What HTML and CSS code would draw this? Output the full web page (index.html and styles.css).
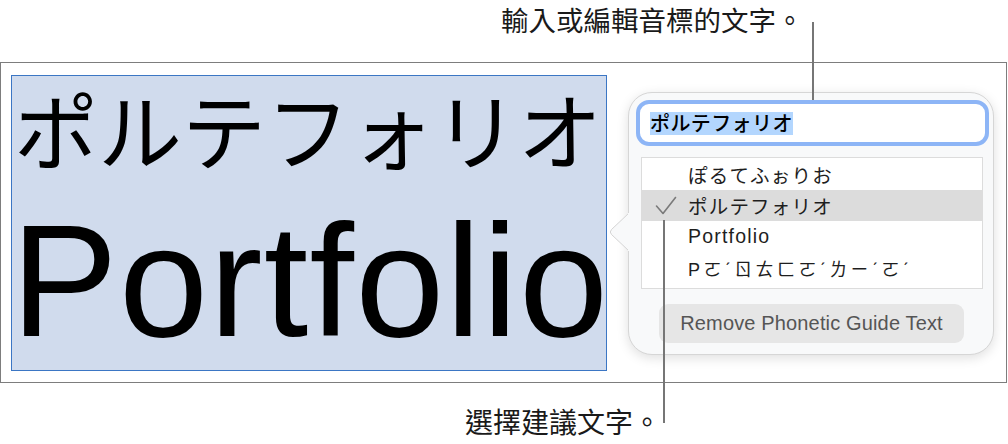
FILE: index.html
```html
<!DOCTYPE html>
<html lang="zh-Hant">
<head>
<meta charset="utf-8">
<title>Phonetic Guide</title>
<link rel="stylesheet" href="styles.css">
</head>
<body>
<div class="page">
  <div class="callout-top"><span class="label">輸入或編輯音標的文字。</span></div>
  <div class="frame">
    <div class="selection">
      <div class="kana" lang="ja">ポルテフォリオ</div>
      <div class="word">Portfolio</div>
    </div>
    <div class="popover">
      <svg class="arrow" width="22" height="38" viewBox="0 0 22 38">
        <path d="M21 0 L3.5 16.5 Q1 19 3.5 21.5 L21 38" fill="#f8f9fa" stroke="#d4d4d4" stroke-width="1"/>
        <rect x="20" y="0" width="2" height="38" fill="#f8f9fa"/>
      </svg>
      <div class="field"><span class="field-text" lang="ja">ポルテフォリオ</span></div>
      <div class="list" lang="ja">
        <div class="row"><span class="row-text">ぽるてふぉりお</span></div>
        <div class="row row-selected">
          <svg class="check" width="22" height="20" viewBox="0 0 22 20"><polyline points="1.5,10 8,17.5 20.5,1.5" fill="none" stroke="#7a7a7a" stroke-width="1.6" stroke-linecap="round" stroke-linejoin="round"/></svg>
          <span class="row-text">ポルテフォリオ</span>
        </div>
        <div class="row"><span class="row-text">Portfolio</span></div>
        <div class="row"><span class="row-text bopo" lang="zh-Hant">Pㄛˊㄖㄊㄈㄛˊㄌㄧˊㄛˊ</span></div>
      </div>
      <div class="button">Remove Phonetic Guide Text</div>
    </div>
  </div>
  <div class="callout-bottom"><span class="label">選擇建議文字。</span></div>
  <div class="leader leader-top"></div>
  <div class="leader leader-bottom"></div>
</div>
</body>
</html>
```
FILE: styles.css
```css
html, body {
  margin: 0;
  padding: 0;
  background: #ffffff;
}

body {
  font-family: "Liberation Sans", "Noto Sans CJK TC", sans-serif;
  color: #111;
}

.page {
  position: relative;
  width: 1008px;
  height: 444px;
  overflow: hidden;
}

.callout-top {
  height: 62px;
  box-sizing: border-box;
  padding: 1px 0 0 501px;
}

.label {
  display: block;
  font-family: "Noto Sans CJK TC", sans-serif;
  font-size: 27.5px;
  line-height: 36px;
  color: #1a1a1a;
  white-space: nowrap;
}

.frame {
  position: relative;
  width: 1007px;
  height: 321px;
  box-sizing: border-box;
  border: 1px solid #7d7d7d;
  padding: 12px 0 0 10px;
}

.selection {
  width: 596px;
  height: 296px;
  box-sizing: border-box;
  border: 1px solid #3b76c4;
  background: #d0dbed;
  padding: 10px 0 0 0;
  color: #000;
  white-space: nowrap;
}

.kana {
  font-family: "Noto Sans CJK JP", sans-serif;
  font-size: 84px;
  line-height: 84px;
  padding-left: 2px;
}

.word {
  font-family: "Liberation Sans", sans-serif;
  font-size: 160px;
  line-height: 160px;
  letter-spacing: 1.25px;
  margin-top: 31px;
  text-indent: -1px;
}

.popover {
  position: absolute;
  left: 627px;
  top: 29px;
  width: 366px;
  height: 263px;
  box-sizing: border-box;
  border: 1px solid #d6d6d6;
  border-radius: 24px;
  background: #f8f9fa;
  box-shadow: 0 3px 12px rgba(0, 0, 0, 0.13);
  padding: 7px 0 0 7px;
}

.arrow {
  position: absolute;
  left: -21px;
  top: 120px;
}

.field {
  width: 353px;
  height: 46px;
  box-sizing: border-box;
  border: 4px solid #8db5f6;
  border-radius: 13px;
  background: #ffffff;
  padding: 0 0 0 10px;
  display: flex;
  align-items: center;
}

.field-text {
  font-family: "Noto Sans CJK JP", sans-serif;
  font-size: 20px;
  font-weight: 500;
  line-height: 22px;
  letter-spacing: 0.4px;
  background: #b3d6fe;
  color: #000;
  padding-bottom: 1px;
}

.list {
  margin: 11px 0 0 5px;
  width: 342px;
  height: 132px;
  box-sizing: border-box;
  border: 1px solid #dcdcdc;
  background: #ffffff;
  padding: 1px 0 5px 0;
}

.row {
  position: relative;
  height: 31px;
  display: flex;
  align-items: center;
  padding-left: 46px;
}

.row-selected {
  background: #dcdcdc;
}

.row-text {
  font-family: "Liberation Sans", "Noto Sans CJK JP", sans-serif;
  font-size: 19.5px;
  letter-spacing: 1.2px;
  color: #1e1e1e;
  white-space: nowrap;
}

.bopo {
  font-family: "Liberation Sans", "Noto Sans CJK TC", sans-serif;
  font-size: 18px;
  letter-spacing: 3.4px;
}

.check {
  position: absolute;
  left: 13px;
  top: 6px;
}

.button {
  margin: 15px 0 0 23px;
  width: 305px;
  height: 39px;
  border-radius: 9px;
  background: #e6e6e6;
  color: #555555;
  font-family: "Liberation Sans", sans-serif;
  font-size: 20px;
  letter-spacing: 0.15px;
  display: flex;
  align-items: center;
  justify-content: center;
}

.callout-bottom {
  padding: 20px 0 0 465px;
}

.callout-bottom .label {
  font-size: 28px;
}

.leader {
  position: absolute;
  width: 2px;
  background: #767676;
}

.leader-top {
  left: 812px;
  top: 22px;
  height: 78px;
}

.leader-bottom {
  left: 663px;
  top: 220px;
  height: 203px;
}
```
